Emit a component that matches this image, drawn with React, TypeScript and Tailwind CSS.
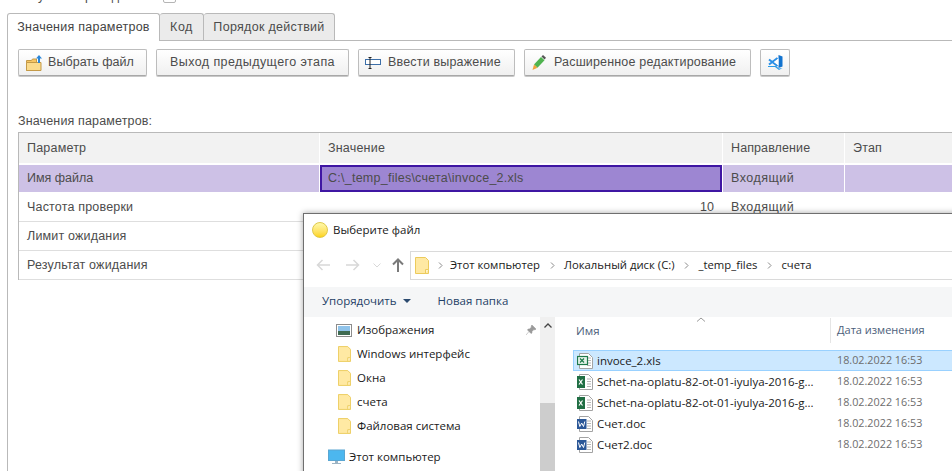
import React from 'react';

const Folder = ({ className = '' }: { className?: string }) => (
  <svg width="14" height="17" viewBox="0 0 14 17" className={`shrink-0 ${className}`}>
    <path d="M.5.5h10l3 3v13H.5z" fill="#ffe9a3" stroke="#eccb5c" />
    <path d="M10.500 16.500v-4h3" fill="#fff5cf" stroke="#eccb5c" />
  </svg>
);

const FileBase = ({ children }: { children: React.ReactNode }) => (
  <svg width="16" height="16" viewBox="0 0 16 16" className="shrink-0">
    <path d="M2.500.5h9l4 4v11h-13z" fill="#fff" stroke="#a3a3a3" />
    <path d="M10 5h4M10 7.500h4M10 10h4M10 12.500h4" stroke="#b5b5b5" />
    {children}
  </svg>
);

const XlsSelectedIcon = () => (
  <FileBase>
    <rect x=".5" y="3.500" width="10" height="8" fill="#e6f2ea" stroke="#1f7a4b" strokeWidth="1.200" />
    <path d="M3 5.500l4 4M7 5.500l-4 4" stroke="#1f7a4b" strokeWidth="1.200" />
  </FileBase>
);

const XlsIcon = () => (
  <FileBase>
    <rect x="0" y="2" width="8" height="12" fill="#1f6e43" />
    <path d="M2 5.500l3.500 5M5.500 5.500l-3.500 5" stroke="#fff" strokeWidth="1.200" />
  </FileBase>
);

const DocIcon = () => (
  <FileBase>
    <rect x="0" y="3" width="9.500" height="10" fill="#2b5797" />
    <path d="M1.500 5.500l1.300 5L4.700 7l1.800 3.500 1.300-5" stroke="#fff" strokeWidth="1" fill="none" />
  </FileBase>
);

const OpenFolderIcon = () => (
  <svg width="16" height="16" viewBox="0 0 16 16">
    <path d="M.5 5.500h5l1-1.500h4v11.500H.5z" fill="#f7c663" stroke="#c49a48" />
    <path d="M.5 7.500h14.500v8H.5z" fill="#fbdb8c" stroke="#c49a48" />
    <path d="M12 8V3.500H10l3-3.500 3 3.500h-2V8z" fill="#2a86d8" />
  </svg>
);

const ExpressionIcon = () => (
  <svg width="16" height="12" viewBox="0 0 16 12">
    <rect x=".5" y="2.500" width="15" height="5" fill="#fff" stroke="#3d6fa8" />
    <path d="M3.500.5h3M3.500 11.500h3M5 .5v11" stroke="#222" fill="none" />
  </svg>
);

const PencilIcon = () => (
  <svg width="14" height="15" viewBox="0 0 14 15">
    <path d="M2 9.500L9 2l3.500 3.200L5.500 12.700z" fill="#4fb34f" />
    <path d="M9.500 1.500L11 0l3 2.800-1.500 1.700z" fill="#555" />
    <path d="M2 9.500l3.500 3.200L.5 15z" fill="#f0a23c" />
  </svg>
);

const VsCodeIcon = () => (
  <svg width="15" height="15" viewBox="0 0 15 15">
    <path d="M10.500 0L14.500 1.500V11.500L10.500 13z" fill="#1173cf" />
    <path d="M1 4.500l8.500 6.500M1 9.500L9.500 3" stroke="#2a8fe6" strokeWidth="2" />
    <path d="M6 7l4.500-3.500V10.500z" fill="#fff" />
    <path d="M0 12h7l4 3 3.500-2-3.500 .5L8 11H0z" fill="#2a9be8" />
  </svg>
);

const ArrowLeft = ({ color }: { color: string }) => (
  <svg width="14" height="12" viewBox="0 0 14 12">
    <path d="M14 6H2M6.500 1L1.500 6l5 5" fill="none" stroke={color} strokeWidth="1.500" />
  </svg>
);

const ToolButton = ({
  label,
  icon,
  className,
  tracking = '',
}: {
  label?: string;
  icon?: React.ReactNode;
  className: string;
  tracking?: string;
}) => (
  <button
    className={`flex h-[27px] shrink-0 items-center rounded-[2px] border border-[#bdbdbd] border-b-[#a8a8a8] bg-gradient-to-b from-white to-[#f0f0f0] text-[#4c4c4c] shadow-[0_1px_0_#c8c8c8] ${className}`}
  >
    {icon}
    {label && <span className={tracking}>{label}</span>}
  </button>
);

const PARAMS = [
  { name: 'Частота проверки', value: '10', dir: 'Входящий' },
  { name: 'Лимит ожидания', value: '', dir: '' },
  { name: 'Результат ожидания', value: '', dir: '' },
];

const NAV = ['Windows интерфейс', 'Окна', 'счета', 'Файловая система'];

const FILES = [
  { name: 'invoce_2.xls', icon: <XlsSelectedIcon />, selected: true },
  { name: 'Schet-na-oplatu-82-ot-01-iyulya-2016-g...', icon: <XlsIcon /> },
  { name: 'Schet-na-oplatu-82-ot-01-iyulya-2016-g...', icon: <XlsIcon /> },
  { name: 'Счет.doc', icon: <DocIcon /> },
  { name: 'Счет2.doc', icon: <DocIcon /> },
];

const Crumb = ({ className = '' }: { className?: string }) => (
  <svg width="5" height="7" viewBox="0 0 5 7" className={`shrink-0 ${className}`}>
    <path d="M1 .5l3 3-3 3" fill="none" stroke="#8a8a8a" />
  </svg>
);

const FileDialog = () => (
  <div className="absolute left-[303px] top-[213px] h-[270px] w-[680px] border border-[#6f6f6f] bg-white font-['Open_Sans',sans-serif] text-[11.500px] text-[#1a1a1a] shadow-[0_0_6px_rgba(0,0,0,0.35)]">
    <div className="mb-[4px] flex h-[32px] items-center gap-[5px] pl-[8px]">
      <div className="h-[16px] w-[16px] rounded-full border border-[#e0c94a] bg-gradient-to-b from-[#fff9a8] to-[#fdd400]" />
      <span>Выберите файл</span>
    </div>
    <div className="flex h-[30px] items-center">
      <div className="flex w-[106px] items-center pl-[12px]">
        <ArrowLeft color="#d8d8d8" />
        <span className="ml-[16px] rotate-180">
          <ArrowLeft color="#d8d8d8" />
        </span>
        <svg width="8" height="5" viewBox="0 0 8 5" className="ml-[13px]">
          <path d="M.5.5L4 4 7.500.5" fill="none" stroke="#d8d8d8" />
        </svg>
        <svg width="12" height="14" viewBox="0 0 12 14" className="ml-[11px]">
          <path d="M6 14V2M1 6.500L6 1.500l5 5" fill="none" stroke="#7a7a7a" strokeWidth="2" />
        </svg>
      </div>
      <div className="flex h-[29px] flex-1 items-center gap-[9.500px] border border-[#dadada] pl-[4px] text-[11.300px]">
        <Folder />
        <Crumb className="-ml-[1px]" />
        <span className="-ml-[2px]">Этот компьютер</span>
        <Crumb />
        <span>Локальный диск (C:)</span>
        <Crumb />
        <span>_temp_files</span>
        <Crumb />
        <span>счета</span>
      </div>
    </div>
    <div className="mt-[7px] flex h-[30px] items-center bg-[#f5f6f7] pb-[2px] pl-[18px] text-[#1f3f66]">
      <span>Упорядочить</span>
      <span className="ml-[6px] h-0 w-0 border-x-[4px] border-t-[4px] border-x-transparent border-t-[#2b4a6f]" />
      <span className="ml-[27px]">Новая папка</span>
    </div>
    <div className="flex">
      <div className="h-[170px] w-[236px] shrink-0 pt-[1px]">
        <div className="flex h-[24px] items-center pl-[32px]">
          <svg width="16" height="13" viewBox="0 0 16 13">
            <rect x=".5" y=".5" width="15" height="12" fill="#fff" stroke="#8c8c8c" />
            <rect x="2" y="2" width="12" height="5" fill="#8fc3ea" />
            <rect x="2" y="7" width="12" height="4" fill="#3f6b52" />
          </svg>
          <span className="ml-[5px]">Изображения</span>
          <svg width="10" height="10" viewBox="0 0 10 10" className="ml-auto mr-[4px]">
            <path d="M6 0l4 4-1 1-1-.5L6 6.500V8L5 8.500 1.500 5 2 4h1.500l2-2L5 1z M3 6.500L0 10" fill="#9a9a9a" stroke="#9a9a9a" strokeWidth=".5" />
          </svg>
        </div>
        {NAV.map((n) => (
          <div key={n} className="flex h-[24px] items-center pl-[34px]">
            <Folder className="h-[16px] w-[13px]" />
            <span className="ml-[6px]">{n}</span>
          </div>
        ))}
        <div className="mt-[7px] flex h-[24px] items-center pl-[24px]">
          <svg width="17" height="16" viewBox="0 0 17 16">
            <rect x=".5" y="1" width="16" height="10.500" fill="#4cb7ef" stroke="#5aa6d2" />
            <path d="M7 12h3v2H7zM4 14h9v1H4z" fill="#9db4c4" />
          </svg>
          <span className="ml-[4px]">Этот компьютер</span>
        </div>
      </div>
      <div className="flex h-[170px] w-[15px] shrink-0 flex-col bg-[#f0f0f0]">
        <div className="flex h-[17px] items-center justify-center">
          <svg width="8" height="5" viewBox="0 0 8 5">
            <path d="M.5 4.500L4 1l3.500 3.500" fill="none" stroke="#444" strokeWidth="1.300" />
          </svg>
        </div>
        <div className="mt-[69px] h-[84px] bg-[#cdcdcd]" />
      </div>
      <div className="w-[20px] shrink-0" />
      <div className="relative flex-1">
        <svg width="10" height="5" viewBox="0 0 10 5" className="absolute left-[121px] top-0">
          <path d="M1 4.500L5 1l4 3.500" fill="none" stroke="#9a9a9a" />
        </svg>
        <div className="flex h-[27px] items-center text-[#4c607a]">
          <span className="w-[256px] border-r border-[#e5e5e5] pl-[1px] leading-[25px]">Имя</span>
          <span className="pl-[6px] text-[11px]">Дата изменения</span>
        </div>
        <div className="-ml-[2px] mt-[6px] w-[384px]">
          {FILES.map((f, i) => (
            <div
              key={i}
              className={`flex h-[21px] items-center border ${f.selected ? 'border-[#99d1ff] bg-[#cce8ff]' : 'border-transparent'}`}
            >
              <div className="flex w-[263px] items-center gap-[4px] pl-[3px]">
                {f.icon}
                <span className="truncate">{f.name}</span>
              </div>
              <span className="text-[10.800px] text-[#6d6d6d]">18.02.2022 16:53</span>
            </div>
          ))}
        </div>
      </div>
    </div>
  </div>
);

export default function App() {
  return (
    <div className="relative h-[471px] w-[952px] overflow-hidden bg-white font-['Liberation_Sans',Arial,sans-serif] text-[12.500px] text-[#4c4c4c]">
      <div className="flex h-[13px] items-start pl-[18px]">
        <div className="-mt-[13px] flex items-center gap-[18px]">
          <span className="w-[127px]">Результат прохода</span>
          <span className="h-[13px] w-[13px] rounded-[2px] border border-[#b5b5b5]" />
        </div>
      </div>
      <div className="ml-[7px] flex h-[28px] items-stretch">
        <div className="relative z-10 flex h-[28px] w-[153px] items-center justify-center rounded-t-[3px] border-x border-t border-[#b9b9b9] bg-white tracking-[0.25px] text-[#444]">
          Значения параметров
        </div>
        <div className="flex h-[27px] w-[44px] items-center justify-center rounded-t-[3px] border-r border-t border-[#b9b9b9] bg-[#ebebeb] tracking-[0.5px]">
          Код
        </div>
        <div className="flex h-[27px] w-[131px] items-center justify-center rounded-t-[3px] border-r border-t border-[#b9b9b9] bg-[#ebebeb] tracking-[0.3px]">
          Порядок действий
        </div>
      </div>
      <div className="-mt-px ml-[7px] h-[440px] border-l border-t border-[#b9b9b9] pl-[10px]">
        <div className="mt-[8px] flex gap-[9px]">
          <ToolButton label="Выбрать файл" icon={<OpenFolderIcon />} className="w-[129px] gap-[6px] pl-[7px]" tracking="tracking-[0.05px]" />
          <ToolButton label="Выход предыдущего этапа" className="w-[193px] justify-center" tracking="tracking-[0.42px]" />
          <ToolButton label="Ввести выражение" icon={<ExpressionIcon />} className="w-[157px] gap-[7px] pl-[6px]" tracking="tracking-[0.18px]" />
          <ToolButton label="Расширенное редактирование" icon={<PencilIcon />} className="w-[227px] gap-[8px] pl-[7px]" tracking="tracking-[0.17px]" />
          <ToolButton icon={<VsCodeIcon />} className="w-[30px] justify-center" />
        </div>
        <div className="mt-[37px] h-[19px] leading-[16px] tracking-[0.15px]">Значения параметров:</div>
        <div className="border-l border-t border-[#b9b9b9]">
          <div className="flex h-[32px] items-stretch gap-px border-b-2 border-white">
            <div className="flex w-[300px] items-center bg-[#f2f2f2] pl-[8px] tracking-[0.2px]">Параметр</div>
            <div className="flex w-[402px] items-center bg-[#f2f2f2] pl-[8px] tracking-[0.2px]">Значение</div>
            <div className="flex w-[121px] items-center bg-[#f2f2f2] pl-[8px] tracking-[0.1px]">Направление</div>
            <div className="flex flex-1 items-center bg-[#f2f2f2] pl-[8px] tracking-[0.2px]">Этап</div>
          </div>
          <div className="flex h-[27px] items-stretch gap-px">
            <div className="flex w-[300px] items-center bg-[#cdc1e6] pl-[8px]">Имя файла</div>
            <div className="flex w-[402px] items-center border-2 border-[#3f16a3] bg-[#9d86d2] pl-[6px] tracking-[0.25px]">
              C:\_temp_files\счета\invoce_2.xls
            </div>
            <div className="flex w-[121px] items-center bg-[#cdc1e6] pl-[8px] tracking-[0.5px]">Входящий</div>
            <div className="flex-1 bg-[#cdc1e6]" />
          </div>
          {PARAMS.map((p, i) => (
            <div key={i} className={`flex h-[29px] items-center border-b border-[#dedede] pt-[1px] ${i === 0 ? 'mt-px' : ''}`}>
              <div className="w-[301px] pl-[8px] tracking-[0.18px]">{p.name}</div>
              <div className="w-[403px] pr-[9px] text-right">{p.value}</div>
              <div className="pl-[8px] tracking-[0.5px]">{p.dir}</div>
            </div>
          ))}
        </div>
      </div>
      <FileDialog />
    </div>
  );
}
